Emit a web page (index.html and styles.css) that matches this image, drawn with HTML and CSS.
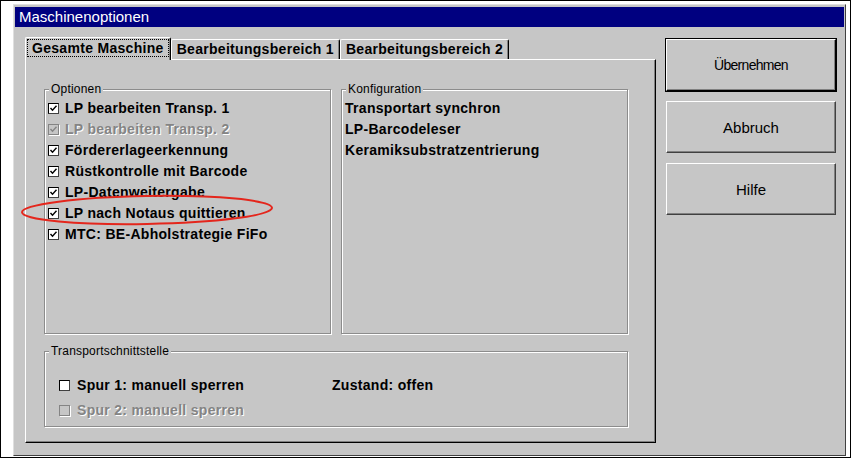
FILE: index.html
```html
<!DOCTYPE html>
<html lang="de">
<head>
    <meta charset="UTF-8">
    <title>Maschinenoptionen</title>
    <link rel="stylesheet" href="styles.css">
</head>
<body>
    <div class="screen">
        <div class="dialog">
            <div class="titlebar">Maschinenoptionen</div>

            <div class="dialog-body">
                <div class="tabs">
                    <div class="tab-strip">
                        <div class="tab active"><span class="focus">Gesamte Maschine</span></div>
                        <div class="tab">Bearbeitungsbereich 1</div>
                        <div class="tab">Bearbeitungsbereich 2</div>
                    </div>

                    <div class="tab-panel">
                        <div class="group-row">
                            <fieldset class="group">
                                <legend>Optionen</legend>
                                <ul class="check-list">
                                    <li class="check"><span class="box checked"></span>LP bearbeiten Transp. 1</li>
                                    <li class="check disabled"><span class="box checked"></span>LP bearbeiten Transp. 2</li>
                                    <li class="check"><span class="box checked"></span>Fördererlageerkennung</li>
                                    <li class="check"><span class="box checked"></span>Rüstkontrolle mit Barcode</li>
                                    <li class="check"><span class="box checked"></span>LP-Datenweitergabe</li>
                                    <li class="check"><span class="box checked"></span>LP nach Notaus quittieren</li>
                                    <li class="check"><span class="box checked"></span>MTC: BE-Abholstrategie FiFo</li>
                                </ul>
                            </fieldset>

                            <fieldset class="group">
                                <legend>Konfiguration</legend>
                                <ul class="config-list">
                                    <li>Transportart synchron</li>
                                    <li>LP-Barcodeleser</li>
                                    <li>Keramiksubstratzentrierung</li>
                                </ul>
                            </fieldset>
                        </div>

                        <fieldset class="group transport">
                            <legend>Transportschnittstelle</legend>
                            <div class="transport-grid">
                                <div class="check"><span class="box"></span>Spur 1: manuell sperren</div>
                                <div class="state">Zustand: offen</div>
                                <div class="check disabled"><span class="box"></span>Spur 2: manuell sperren</div>
                            </div>
                        </fieldset>
                    </div>
                </div>

                <div class="buttons">
                    <button class="btn default small">Übernehmen</button>
                    <button class="btn">Abbruch</button>
                    <button class="btn">Hilfe</button>
                </div>
            </div>
        </div>

        <!-- rote Markierung -->
        <svg class="marker" width="851" height="458" viewBox="0 0 851 458">
            <ellipse cx="146" cy="209" rx="125" ry="14" transform="rotate(-1 146 209)"
                     fill="none" stroke="#e4261c" stroke-width="2"/>
        </svg>
    </div>
</body>
</html>
```

FILE: styles.css
```css
body {
    margin: 0;
    background-color: #fff;
    font-family: "Liberation Sans", Arial, sans-serif;
}

.screen {
    position: relative;
    width: 851px;
    height: 458px;
    box-sizing: border-box;
    border: 1px solid #000;
    padding: 3px 0 0 12px;
}

/* Dialogfenster */
.dialog {
    width: 833px;
    height: 452px;
    box-sizing: border-box;
    background-color: #c6c6c6;
    border: 1px solid #404040;
    border-top-color: #dfdfdf;
    border-left-color: #dfdfdf;
    padding: 2px 1px 1px 1px;
}

.titlebar {
    height: 20px;
    line-height: 20px;
    background-color: #000080;
    color: #fff;
    font-size: 15px;
    padding-left: 4px;
}

.dialog-body {
    display: flex;
    gap: 10px;
    padding: 10px 0 0 10px;
}

/* Registerkarten */
.tabs {
    width: 631px;
}

.tab-strip {
    display: flex;
    align-items: flex-end;
    height: 22px;
}

.tab {
    height: 19px;
    line-height: 19px;
    padding: 0 5px;
    font-size: 14px;
    font-weight: bold;
    letter-spacing: 0.3px;
    border: 1px solid #fff;
    border-right-color: #000;
    border-bottom: none;
    border-radius: 2px 2px 0 0;
    box-shadow: inset -1px 0 0 #808080;
}

.tab.active {
    position: relative;
    z-index: 1;
    height: 22px;
    line-height: 20px;
    margin-bottom: -1px;
    padding: 0 2px;
    background-color: #c6c6c6;
}

.focus {
    display: inline-block;
    line-height: 16px;
    padding: 0 4px;
    outline: 1px dotted #000;
}

.tab-panel {
    height: 384px;
    box-sizing: border-box;
    border: 1px solid #000;
    border-top-color: #fff;
    border-left-color: #fff;
    box-shadow: inset -1px -1px 0 #808080;
    padding: 22px 0 0 18px;
}

.group-row {
    display: flex;
    gap: 10px;
}

/* Gruppenrahmen */
.group {
    margin: 0;
    min-width: 0;
    width: 287px;
    height: 252px;
    box-sizing: border-box;
    padding: 1px 3px 0 3px;
    border: 1px solid #8c8c8c;
    box-shadow: 1px 1px 0 #fff, inset 1px 1px 0 #fff;
}

.group legend {
    font-size: 12px;
    line-height: 15px;
    letter-spacing: 0.2px;
    padding: 0 2px;
    margin-left: 1px;
    background-color: #c6c6c6;
}

.check-list,
.config-list {
    list-style: none;
    margin: 0;
    padding: 0;
}

.check,
.config-list li,
.state {
    height: 21px;
    line-height: 21px;
    font-size: 14px;
    font-weight: bold;
    letter-spacing: 0.3px;
    white-space: nowrap;
}

.check {
    display: flex;
    align-items: center;
    gap: 6px;
}

.box {
    width: 11px;
    height: 11px;
    box-sizing: border-box;
    background-color: #fff;
    border: 1px solid #000;
    border-right-color: #404040;
    border-bottom-color: #404040;
}

.box.checked {
    background: #fff url("data:image/svg+xml;utf8,<svg xmlns='http://www.w3.org/2000/svg' width='9' height='9'><path d='M1.5 4 L3.5 6.3 L7.5 1.8' fill='none' stroke='black' stroke-width='1.4'/></svg>") no-repeat center;
}

.check.disabled {
    color: #848484;
    text-shadow: 1px 1px 0 #fff;
}

.check.disabled .box {
    background-color: #c6c6c6;
    border-color: #848484;
    box-shadow: 1px 1px 0 #fff;
}

.check.disabled .box.checked {
    background: #c6c6c6 url("data:image/svg+xml;utf8,<svg xmlns='http://www.w3.org/2000/svg' width='9' height='9'><path d='M1.5 4 L3.5 6.3 L7.5 1.8' fill='none' stroke='%23848484' stroke-width='1.4'/></svg>") no-repeat center;
}

.transport {
    width: 584px;
    height: 83px;
    margin-top: 10px;
    padding-top: 16px;
}

.transport-grid {
    display: grid;
    grid-template-columns: 273px auto;
    row-gap: 4px;
    margin-left: 11px;
}

.transport .check {
    gap: 7px;
}

/* Schaltflächen */
.buttons {
    display: flex;
    flex-direction: column;
    gap: 10px;
    padding-top: 2px;
}

.btn {
    width: 170px;
    height: 52px;
    font-family: "Liberation Sans", Arial, sans-serif;
    font-size: 15px;
    color: #000;
    background-color: #c6c6c6;
    border: 1px solid #404040;
    border-top-color: #fff;
    border-left-color: #fff;
    box-shadow: inset -1px -1px 0 #808080;
    padding: 0;
}

.btn.small {
    font-size: 14px;
    letter-spacing: -0.7px;
}

.btn.default {
    outline: 1px solid #000;
    border-right-color: #000;
    border-bottom-color: #000;
}

.marker {
    position: absolute;
    left: 0;
    top: 0;
    pointer-events: none;
}
```
